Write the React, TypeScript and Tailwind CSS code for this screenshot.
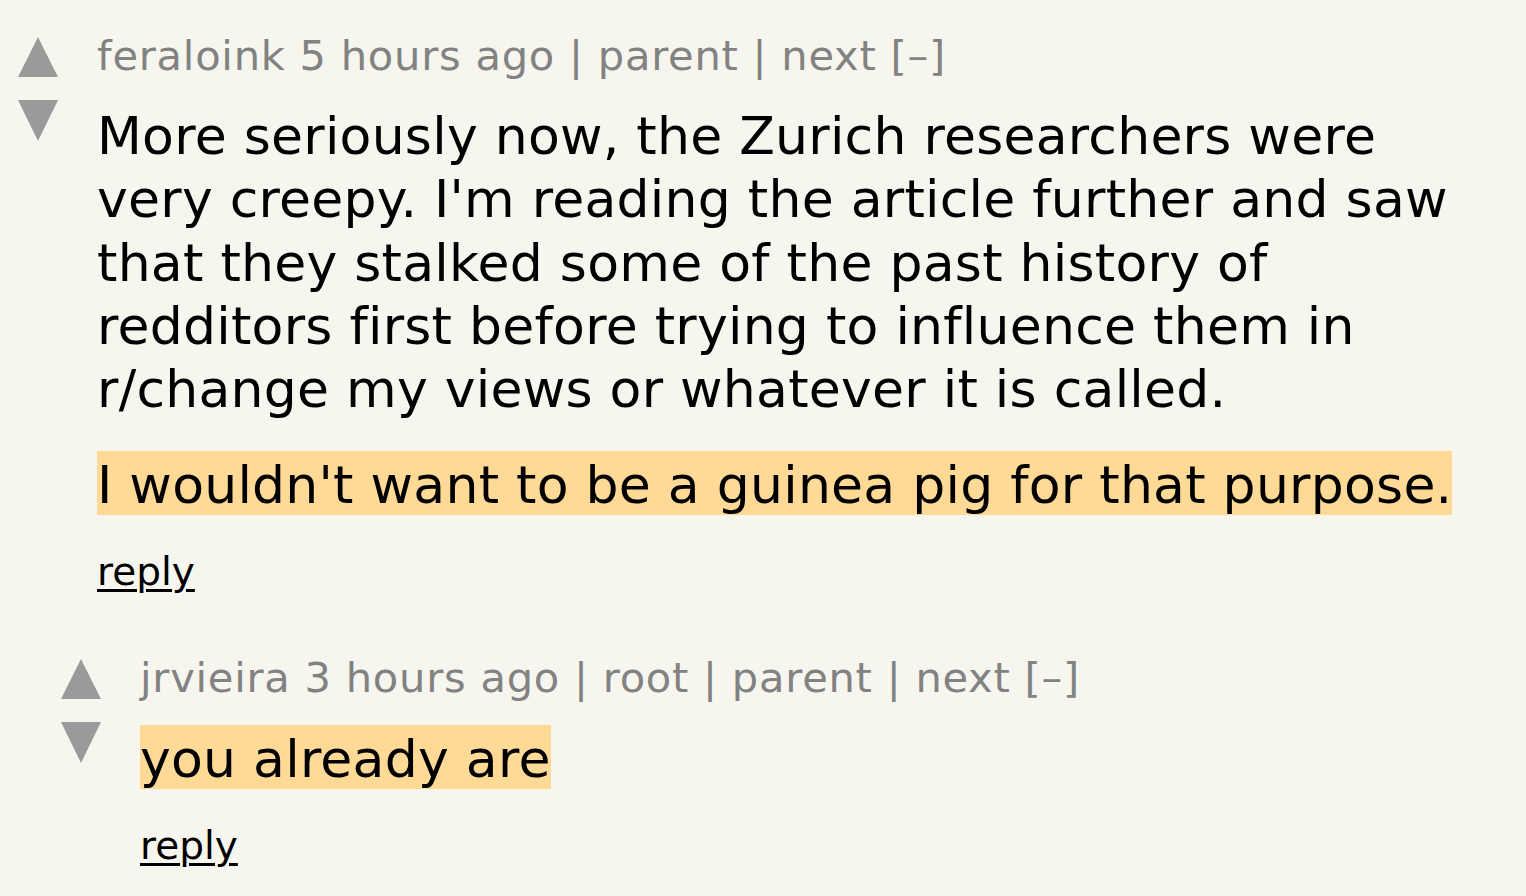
const font = "font-['DejaVu_Sans','Verdana',sans-serif]";

function UpArrow() {
  return (
    <svg width="40" height="40" viewBox="0 0 40 40" className="block">
      <polygon points="20,0 40,40 0,40" fill="#9a9a9a" />
    </svg>
  );
}

function DownArrow() {
  return (
    <svg width="40" height="41" viewBox="0 0 40 41" className="block">
      <polygon points="0,0 40,0 20,41" fill="#9a9a9a" />
    </svg>
  );
}

function Votes() {
  return (
    <div className="flex w-[40px] shrink-0 flex-col gap-[23px] pt-[5px]">
      <UpArrow />
      <DownArrow />
    </div>
  );
}

function Header({ user, age, links }: { user: string; age: string; links: string[] }) {
  return (
    <div className="text-[41.6px] leading-[48px] tracking-[0.75px] text-[#828282] whitespace-nowrap">
      {user} {age}
      {links.map((l) => (
        <span key={l}> | {l}</span>
      ))}{" "}
      [–]
    </div>
  );
}

function Highlight({ children }: { children: React.ReactNode }) {
  return <span className="bg-[#ffd996] pt-[4px]">{children}</span>;
}

function Reply({ className }: { className: string }) {
  return (
    <div className={`text-[39px] leading-[45px] ${className}`}>
      <a className="text-black underline decoration-[3px] underline-offset-[4px]">reply</a>
    </div>
  );
}

export default function App() {
  return (
    <div className={`min-h-screen w-full bg-[#f6f6ef] text-black [font-variant-ligatures:none] ${font}`}>
      {/* first comment */}
      <div className="flex pl-[18px] pt-[32px]">
        <Votes />
        <div className="ml-[39px] w-[1365px]">
          <Header user="feraloink" age="5 hours ago" links={["parent", "next"]} />
          <div className="mt-[25px] text-[52px] leading-[63.25px] tracking-[0.25px]">
            <p>
              More seriously now, the Zurich researchers were very creepy. I'm reading the article
              further and saw that they stalked some of the past history of redditors first before
              trying to influence them in r/change my views or whatever it is called.
            </p>
            <p className="mt-[33px]">
              <Highlight>I wouldn't want to be a guinea pig for that purpose.</Highlight>
            </p>
          </div>
          <Reply className="mt-[31px]" />
        </div>
      </div>

      {/* nested reply */}
      <div className="flex pl-[61px] pt-[60px]">
        <Votes />
        <div className="ml-[39px] w-[1322px]">
          <Header user="jrvieira" age="3 hours ago" links={["root", "parent", "next"]} />
          <div className="mt-[26px] text-[52px] leading-[63.25px] tracking-[0.25px]">
            <p>
              <Highlight>you already are</Highlight>
            </p>
          </div>
          <Reply className="mt-[32px]" />
        </div>
      </div>
    </div>
  );
}
